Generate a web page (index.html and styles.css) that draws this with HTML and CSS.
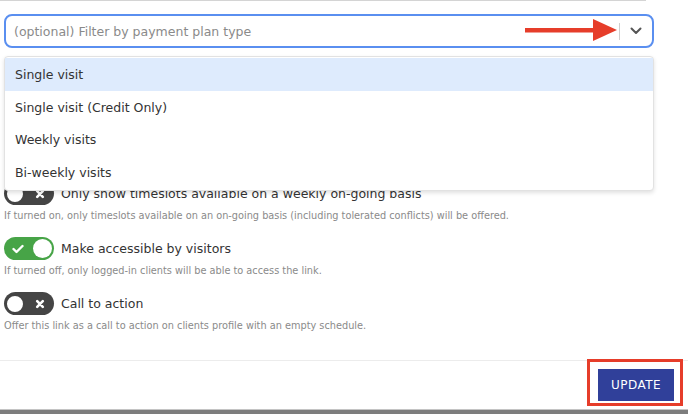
FILE: index.html
```html
<!DOCTYPE html>
<html>
<head>
<meta charset="utf-8">
<link rel="stylesheet" href="styles.css">
</head>
<body>
<div class="page">
  <div class="topline"></div>
  <div class="field">
    <div class="select">
      <span class="placeholder">(optional) Filter by payment plan type</span>
      <span class="sep"></span>
      <svg class="chev" width="12" height="8" viewBox="0 0 12 8"><path d="M1.5 1.5 L6 6 L10.5 1.5" fill="none" stroke="#555" stroke-width="2" stroke-linecap="round" stroke-linejoin="round"/></svg>
    </div>
    <svg class="arrow" width="96" height="24" viewBox="0 0 96 24"><rect x="0" y="9" width="72" height="4.5" fill="#e63d2a"/><polygon points="68,0 92,11 68,22" fill="#e63d2a"/></svg>
    <div class="menu">
      <div class="opt active">Single visit</div>
      <div class="opt">Single visit (Credit Only)</div>
      <div class="opt">Weekly visits</div>
      <div class="opt">Bi-weekly visits</div>
    </div>
  </div>

  <div class="settings">
    <div class="setting">
      <div class="row">
        <span class="toggle off"><span class="knob"></span><svg class="ico x" width="10" height="10" viewBox="0 0 10 10"><path d="M2.2 2.2 L7.8 7.8 M7.8 2.2 L2.2 7.8" stroke="#fff" stroke-width="2.6" stroke-linecap="round"/></svg></span>
        <span class="label">Only show timeslots available on a weekly on-going basis</span>
      </div>
      <div class="help">If turned on, only timeslots available on an on-going basis (including tolerated conflicts) will be offered.</div>
    </div>
    <div class="setting">
      <div class="row">
        <span class="toggle on"><svg class="ico check" width="12" height="10" viewBox="0 0 12 10"><path d="M1.5 5 L4.5 8 L10.5 2" fill="none" stroke="#fff" stroke-width="2.4" stroke-linecap="round" stroke-linejoin="round"/></svg><span class="knob"></span></span>
        <span class="label">Make accessible by visitors</span>
      </div>
      <div class="help">If turned off, only logged-in clients will be able to access the link.</div>
    </div>
    <div class="setting">
      <div class="row">
        <span class="toggle off"><span class="knob"></span><svg class="ico x" width="10" height="10" viewBox="0 0 10 10"><path d="M2.2 2.2 L7.8 7.8 M7.8 2.2 L2.2 7.8" stroke="#fff" stroke-width="2.6" stroke-linecap="round"/></svg></span>
        <span class="label">Call to action</span>
      </div>
      <div class="help">Offer this link as a call to action on clients profile with an empty schedule.</div>
    </div>
  </div>

  <div class="footer">
    <div class="btnwrap">
      <button class="update">UPDATE</button>
      <span class="highlight"></span>
    </div>
  </div>
  <div class="bottombar"></div>
</div>
</body>
</html>
```
FILE: styles.css
```css
html, body {
  margin: 0;
  padding: 0;
  background: #fff;
}
.page {
  width: 688px;
  height: 414px;
  position: relative;
  overflow: hidden;
  font-family: "DejaVu Sans", "Noto Sans", sans-serif;
  color: #333;
}
.topline {
  width: 646px;
  height: 1px;
  background: #d4d4d4;
}
.field {
  position: relative;
  margin: 13px 34px 0 4px;
}
.select {
  box-sizing: border-box;
  height: 34px;
  border: 2px solid #5a8ff0;
  border-radius: 8px;
  display: flex;
  align-items: center;
  padding: 0 10px 0 8px;
}
.placeholder {
  flex: 1;
  font-size: 12.5px;
  color: #8a8a8a;
}
.sep {
  width: 1px;
  height: 17px;
  background: #cfcfcf;
  margin-right: 10px;
}
.chev {
  display: block;
}
.arrow {
  position: absolute;
  left: 521px;
  top: 5px;
}
.menu {
  position: absolute;
  left: 0;
  top: 42px;
  width: 650px;
  box-sizing: border-box;
  background: #fff;
  border: 1px solid #e2e2e2;
  border-radius: 4px;
  box-shadow: 0 2px 4px rgba(0,0,0,0.12);
  padding: 1px 0 2px;
  z-index: 5;
}
.opt {
  height: 32.5px;
  line-height: 33.5px;
  padding-left: 10px;
  font-size: 12.5px;
  color: #333;
}
.opt.active {
  background: #deebfd;
}
.settings {
  margin: 134px 0 0 4px;
}
.setting {
  margin-bottom: 14px;
}
.row {
  display: flex;
  align-items: center;
  height: 23px;
}
.toggle {
  position: relative;
  box-sizing: border-box;
  width: 50px;
  height: 23px;
  border-radius: 12px;
  display: flex;
  align-items: center;
  justify-content: space-between;
  padding: 0 2px;
  margin-right: 7px;
}
.toggle.on {
  background: #47a447;
  padding-left: 8px;
}
.toggle.off {
  background: #454545;
  padding: 0 9px 0 1px;
}
.knob {
  width: 20px;
  height: 20px;
  border-radius: 50%;
  background: #fff;
  box-sizing: border-box;
}
.toggle.on .knob {
  width: 19px;
  height: 19px;
}
.toggle.off .knob {
  border: 2px solid #444;
}
.ico {
  display: block;
}
.label {
  font-size: 12.5px;
  color: #333;
}
.help {
  font-size: 9.75px;
  color: #8a8a8a;
  margin-top: 4px;
  line-height: 14px;
}
.footer {
  position: absolute;
  left: 0;
  top: 360px;
  width: 688px;
  border-top: 1px solid #ececec;
  display: flex;
  justify-content: flex-end;
  padding: 8px 14px 0 0;
  box-sizing: border-box;
}
.btnwrap {
  position: relative;
}
.update {
  display: block;
  width: 76px;
  height: 32px;
  border: none;
  background: #30409a;
  color: #fff;
  font-family: "DejaVu Sans", sans-serif;
  font-size: 12px;
  letter-spacing: 0.5px;
  padding: 0;
}
.highlight {
  position: absolute;
  left: -11px;
  top: -10px;
  width: 96px;
  height: 47px;
  box-sizing: border-box;
  border: 3px solid #e63d2a;
}
.bottombar {
  position: absolute;
  left: 0;
  top: 409px;
  width: 688px;
  height: 5px;
  background: #7d7d7d;
  border-top: 1px solid #c4c4c4;
  box-sizing: border-box;
}
```
